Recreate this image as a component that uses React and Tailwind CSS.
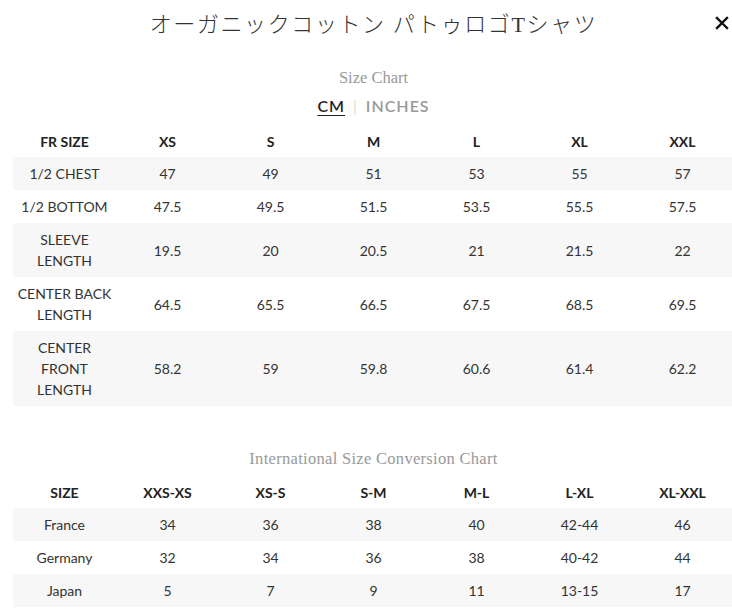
import React from "react";

const sizeHead = ["FR SIZE", "XS", "S", "M", "L", "XL", "XXL"];
const sizeRows = [
  [["1/2 CHEST"], "47", "49", "51", "53", "55", "57"],
  [["1/2 BOTTOM"], "47.5", "49.5", "51.5", "53.5", "55.5", "57.5"],
  [["SLEEVE", "LENGTH"], "19.5", "20", "20.5", "21", "21.5", "22"],
  [["CENTER BACK", "LENGTH"], "64.5", "65.5", "66.5", "67.5", "68.5", "69.5"],
  [["CENTER", "FRONT", "LENGTH"], "58.2", "59", "59.8", "60.6", "61.4", "62.2"],
];
const intlHead = ["SIZE", "XXS-XS", "XS-S", "S-M", "M-L", "L-XL", "XL-XXL"];
const intlRows = [
  [["France"], "34", "36", "38", "40", "42-44", "46"],
  [["Germany"], "32", "34", "36", "38", "40-42", "44"],
  [["Japan"], "5", "7", "9", "11", "13-15", "17"],
];

function Table({ head, rows }) {
  return (
    <table className="w-[721px] table-fixed border-collapse text-[14px] text-[#333]">
      <thead>
        <tr className="h-[32px]">
          {head.map((h) => (
            <th key={h} className="font-bold text-[#222] text-center">{h}</th>
          ))}
        </tr>
      </thead>
      <tbody>
        {rows.map((r, i) => (
          <tr key={i} className={i % 2 === 0 ? "bg-[#f7f7f7]" : "bg-white"}>
            <td className="text-center py-[6px] leading-[21px]">
              {r[0].map((l) => (
                <div key={l}>{l}</div>
              ))}
            </td>
            {r.slice(1).map((c, j) => (
              <td key={j} className="text-center py-[6px] leading-[21px]">{c}</td>
            ))}
          </tr>
        ))}
      </tbody>
    </table>
  );
}

export default function App() {
  return (
    <div className="w-[732px] h-[612px] overflow-hidden bg-white relative" style={{ fontFamily: "Lato, 'Noto Sans', sans-serif" }}>
      <div className="pl-[13px] w-[734px]">
        <div className="h-[46px] flex items-center justify-center pt-[3px]">
          <h1 className="text-[22px] text-[#333] font-light tracking-[1.6px]" style={{ fontFamily: "'Liberation Serif', 'Noto Sans CJK JP', serif" }}>
            オーガニックコットン パトゥロゴTシャツ
          </h1>
        </div>
        <div className="mt-[22px] text-center text-[16.5px] leading-[20px] text-[#999]" style={{ fontFamily: "'Liberation Serif', serif" }}>
          Size Chart
        </div>
        <div className="mt-[7px] flex justify-center items-center text-[16px] leading-[22px] tracking-[1px] font-semibold">
          <span className="text-[#222] underline underline-offset-[3px]">CM</span>
          <span className="text-[#bbb] mx-[8px] font-light">|</span>
          <span className="text-[#999]">INCHES</span>
        </div>
        <div className="mt-[8px]">
          <Table head={sizeHead} rows={sizeRows} />
        </div>
        <div className="mt-[43px] text-center text-[16.5px] leading-[20px] text-[#999] tracking-[0.3px]" style={{ fontFamily: "'Liberation Serif', serif" }}>
          International Size Conversion Chart
        </div>
        <div className="mt-[7px]">
          <Table head={intlHead} rows={intlRows} />
        </div>
      </div>
      <button className="absolute right-[1px] top-[11px] w-[18px] h-[24px] flex items-center justify-center">
        <svg width="14" height="14" viewBox="0 0 14 14">
          <path d="M2 2 L12 12 M12 2 L2 12" stroke="#111" strokeWidth="2.4" strokeLinecap="square" />
        </svg>
      </button>
    </div>
  );
}
